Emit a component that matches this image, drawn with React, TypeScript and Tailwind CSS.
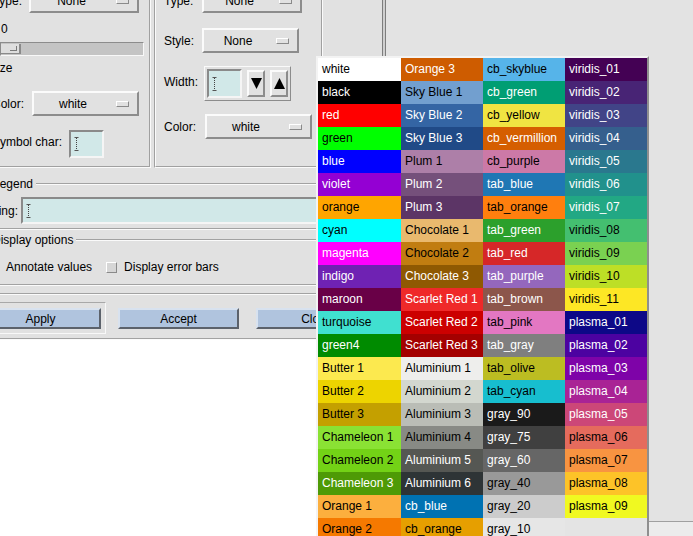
import React from 'react';

type Swatch = [string, string];

const columns: Swatch[][] = [
  [
    ['white', 'bg-[#ffffff] text-black'],
    ['black', 'bg-[#000000] text-white'],
    ['red', 'bg-[#ff0000] text-white'],
    ['green', 'bg-[#00ff00] text-black'],
    ['blue', 'bg-[#0000ff] text-white'],
    ['violet', 'bg-[#9400d3] text-white'],
    ['orange', 'bg-[#ffa500] text-black'],
    ['cyan', 'bg-[#00ffff] text-black'],
    ['magenta', 'bg-[#ff00ff] text-white'],
    ['indigo', 'bg-[#6f22b3] text-white'],
    ['maroon', 'bg-[#690047] text-white'],
    ['turquoise', 'bg-[#40e0d0] text-black'],
    ['green4', 'bg-[#008b00] text-white'],
    ['Butter 1', 'bg-[#fce94f] text-black'],
    ['Butter 2', 'bg-[#edd400] text-black'],
    ['Butter 3', 'bg-[#c4a000] text-black'],
    ['Chameleon 1', 'bg-[#8ae234] text-black'],
    ['Chameleon 2', 'bg-[#73d216] text-black'],
    ['Chameleon 3', 'bg-[#4e9a06] text-white'],
    ['Orange 1', 'bg-[#fcaf3e] text-black'],
    ['Orange 2', 'bg-[#f57900] text-black'],
  ],
  [
    ['Orange 3', 'bg-[#ce5c00] text-white'],
    ['Sky Blue 1', 'bg-[#729fcf] text-black'],
    ['Sky Blue 2', 'bg-[#3465a4] text-white'],
    ['Sky Blue 3', 'bg-[#204a87] text-white'],
    ['Plum 1', 'bg-[#ad7fa8] text-black'],
    ['Plum 2', 'bg-[#75507b] text-white'],
    ['Plum 3', 'bg-[#5c3566] text-white'],
    ['Chocolate 1', 'bg-[#e9b96e] text-black'],
    ['Chocolate 2', 'bg-[#c17d11] text-black'],
    ['Chocolate 3', 'bg-[#8f5902] text-white'],
    ['Scarlet Red 1', 'bg-[#ef2929] text-white'],
    ['Scarlet Red 2', 'bg-[#cc0000] text-white'],
    ['Scarlet Red 3', 'bg-[#a40000] text-white'],
    ['Aluminium 1', 'bg-[#eeeeec] text-black'],
    ['Aluminium 2', 'bg-[#d3d7cf] text-black'],
    ['Aluminium 3', 'bg-[#babdb6] text-black'],
    ['Aluminium 4', 'bg-[#888a85] text-black'],
    ['Aluminium 5', 'bg-[#555753] text-white'],
    ['Aluminium 6', 'bg-[#2e3436] text-white'],
    ['cb_blue', 'bg-[#0072b2] text-white'],
    ['cb_orange', 'bg-[#e69f00] text-black'],
  ],
  [
    ['cb_skyblue', 'bg-[#56b4e9] text-black'],
    ['cb_green', 'bg-[#009e73] text-white'],
    ['cb_yellow', 'bg-[#f0e442] text-black'],
    ['cb_vermillion', 'bg-[#d55e00] text-white'],
    ['cb_purple', 'bg-[#cc79a7] text-black'],
    ['tab_blue', 'bg-[#1f77b4] text-white'],
    ['tab_orange', 'bg-[#ff7f0e] text-black'],
    ['tab_green', 'bg-[#2ca02c] text-white'],
    ['tab_red', 'bg-[#d62728] text-white'],
    ['tab_purple', 'bg-[#9467bd] text-white'],
    ['tab_brown', 'bg-[#8c564b] text-white'],
    ['tab_pink', 'bg-[#e377c2] text-black'],
    ['tab_gray', 'bg-[#7f7f7f] text-white'],
    ['tab_olive', 'bg-[#bcbd22] text-black'],
    ['tab_cyan', 'bg-[#17becf] text-black'],
    ['gray_90', 'bg-[#1a1a1a] text-white'],
    ['gray_75', 'bg-[#404040] text-white'],
    ['gray_60', 'bg-[#666666] text-white'],
    ['gray_40', 'bg-[#999999] text-black'],
    ['gray_20', 'bg-[#cccccc] text-black'],
    ['gray_10', 'bg-[#e6e6e6] text-black'],
  ],
  [
    ['viridis_01', 'bg-[#440154] text-white'],
    ['viridis_02', 'bg-[#482475] text-white'],
    ['viridis_03', 'bg-[#414487] text-white'],
    ['viridis_04', 'bg-[#355f8d] text-white'],
    ['viridis_05', 'bg-[#2a788e] text-white'],
    ['viridis_06', 'bg-[#21918c] text-white'],
    ['viridis_07', 'bg-[#22a884] text-white'],
    ['viridis_08', 'bg-[#44bf70] text-black'],
    ['viridis_09', 'bg-[#7ad151] text-black'],
    ['viridis_10', 'bg-[#bddf26] text-black'],
    ['viridis_11', 'bg-[#fde725] text-black'],
    ['plasma_01', 'bg-[#0d0887] text-white'],
    ['plasma_02', 'bg-[#4c02a1] text-white'],
    ['plasma_03', 'bg-[#7e03a8] text-white'],
    ['plasma_04', 'bg-[#a92395] text-white'],
    ['plasma_05', 'bg-[#cc4778] text-white'],
    ['plasma_06', 'bg-[#e56b5d] text-black'],
    ['plasma_07', 'bg-[#f89441] text-black'],
    ['plasma_08', 'bg-[#fdc328] text-black'],
    ['plasma_09', 'bg-[#f0f921] text-black'],
  ],
];

const colWidths = ['w-[83px]', 'w-[82px]', 'w-[82px]', 'w-[82px]'];

const raised = 'border-2 border-t-[#fbfbfb] border-l-[#fbfbfb] border-r-[#8c8c8c] border-b-[#8c8c8c]';
const sunken = 'border-2 border-t-[#8a8a8a] border-l-[#8a8a8a] border-r-[#f5f5f5] border-b-[#f5f5f5]';
const tkButton = 'border-2 border-t-[#d8e2ef] border-l-[#d8e2ef] border-r-[#5c626b] border-b-[#5c626b] bg-[#b0c4de]';

const Groove = ({ className = '' }: { className?: string }) => (
  <div className={`h-[2px] shrink-0 border-t border-t-[#a2a2a2] border-b border-b-[#fafafa] ${className}`} />
);

const Cursor = () => (
  <svg width="5" height="14" viewBox="0 0 5 14" className="shrink-0">
    <path d="M0.5 0.5h4M0.5 13.5h4" stroke="#555" strokeWidth="1" />
    <path d="M2.5 1v12" stroke="#444" strokeWidth="1" strokeDasharray="1 1" />
  </svg>
);

const Entry = ({ className = '' }: { className?: string }) => (
  <div className={`${sunken} bg-[#d1e8e8] flex items-center pl-[3px] ${className}`}>
    <Cursor />
  </div>
);

const OptionButton = ({ label, className }: { label: string; className: string }) => (
  <div className={`${raised} bg-[#e1e1e1] h-[25px] flex items-center pr-[8px] shrink-0 ${className}`}>
    <span className="flex-1 text-center mr-[4px]">{label}</span>
    <span className="w-[13px] h-[6px] border border-t-white border-l-white border-r-[#8a8a8a] border-b-[#8a8a8a]" />
  </div>
);

const SpinArrow = ({ up }: { up?: boolean }) => (
  <div className={`${raised} bg-[#e1e1e1] ml-[5px] w-[18px] h-[27px] flex items-center justify-center`}>
    <svg width="11" height="11" viewBox="0 0 11 11">
      <polygon points={up ? '5.5,0 11,11 0,11' : '0,0 11,0 5.5,11'} fill="#000" />
    </svg>
  </div>
);

const ColorPopup = () => (
  <div className="absolute left-[316px] top-[56px] flex border-2 border-t-[#f3f3f3] border-l-[#f3f3f3] border-r-[#8f8f8f] border-b-[#8f8f8f] bg-[#e4e4e4]">
    {columns.map((col, i) => (
      <div key={i} className={`flex flex-col ${colWidths[i]}`}>
        {col.map(([name, cls]) => (
          <div key={name} className={`h-[23px] leading-[23px] pl-[4px] whitespace-nowrap overflow-hidden ${cls}`}>
            {name}
          </div>
        ))}
      </div>
    ))}
  </div>
);

export default function App() {
  return (
    <div className="relative flex w-[693px] h-[536px] overflow-hidden whitespace-nowrap bg-[#e3e3e3] text-black text-[12px] leading-[14px] font-['Liberation_Sans',Arial,sans-serif]">
      {/* Dialog + desktop below */}
      <div className="w-[386px] flex flex-col shrink-0">
        <div className="flex h-[340px] bg-[#e1e1e1] overflow-hidden shrink-0">
          <div className="w-[382px] flex flex-col">
            {/* Marker / line frames */}
            <div className="flex h-[168px] shrink-0">
              <div className="w-[151px] h-full border-r border-b border-[#fafafa]">
                <div className="h-full border-r border-b border-[#a0a0a0] flex flex-col">
                  <div className="flex items-center h-[25px] -mt-[12px] shrink-0">
                    <span className="-ml-[8px] w-[30px] text-right shrink-0">Type:</span>
                    <OptionButton label="None" className="ml-[7px] w-[110px]" />
                  </div>
                  <div className="mt-[9px] h-[14px] pl-[1px]">0</div>
                  <div className="mt-[6px] h-[14px] w-[144px] border border-t-[#8c8c8c] border-l-[#8c8c8c] border-b-[#f8f8f8] border-r-[#f8f8f8] bg-[#c4c4c4] flex py-[1px]">
                    <div className="w-[20px] h-full bg-[#dedede] border-r-2 border-b border-r-[#8a8a8a] border-b-[#8a8a8a] flex items-center justify-end pr-[2px]">
                      <div className="w-[7px] h-[5px] border-r border-b border-[#7a7a7a]" />
                    </div>
                  </div>
                  <div className="mt-[5px] h-[14px] -ml-[11px]">Size</div>
                  <div className="mt-[16px] flex items-center h-[25px] shrink-0">
                    <span className="-ml-[9px] w-[33px] text-right shrink-0">Color:</span>
                    <OptionButton label="white" className="ml-[8px] w-[107px]" />
                  </div>
                  <div className="mt-[14px] flex items-center h-[28px] shrink-0">
                    <span className="-ml-[12px] w-[74px] text-right shrink-0 mb-[4px]">Symbol char:</span>
                    <Entry className="ml-[7px] w-[35px] h-[28px]" />
                  </div>
                </div>
              </div>

              <div className="w-[169px] ml-[3px] h-full border-l border-l-[#a0a0a0] border-r border-r-[#fafafa] border-b border-b-[#fafafa]">
                <div className="h-full border-l border-l-[#fafafa] border-r border-r-[#a0a0a0] border-b border-b-[#a0a0a0] flex flex-col">
                  <div className="flex items-center h-[25px] -mt-[12px] shrink-0">
                    <span className="pl-[8px] w-[46px] shrink-0">Type:</span>
                    <OptionButton label="None" className="w-[100px]" />
                  </div>
                  <div className="flex items-center h-[25px] mt-[15px] shrink-0">
                    <span className="pl-[8px] w-[46px] shrink-0">Style:</span>
                    <OptionButton label="None" className="w-[97px]" />
                  </div>
                  <div className="flex items-center h-[35px] mt-[13px] shrink-0">
                    <span className="pl-[8px] w-[46px] shrink-0 mb-[3px]">Width:</span>
                    <div className="ml-[2px] w-[87px] h-[35px] border border-t-[#fafafa] border-l-[#fafafa] border-r-[#8c8c8c] border-b-[#8c8c8c] p-[2px] flex items-center">
                      <Entry className="w-[35px] h-[29px]" />
                      <SpinArrow />
                      <SpinArrow up />
                    </div>
                  </div>
                  <div className="flex items-center h-[25px] mt-[13px] shrink-0">
                    <span className="pl-[8px] w-[46px] shrink-0">Color:</span>
                    <OptionButton label="white" className="ml-[3px] w-[107px]" />
                  </div>
                </div>
              </div>
            </div>

            {/* Legend */}
            <div className="mt-[9px] h-[14px] flex items-center shrink-0">
              <span className="-ml-[7px] shrink-0">Legend</span>
              <Groove className="flex-1 ml-[3px] mr-[4px]" />
            </div>
            <div className="mt-[6px] h-[27px] flex items-center shrink-0">
              <span className="-ml-[17px] w-[35px] text-right shrink-0">String:</span>
              <Entry className="ml-[3px] flex-1 h-[27px] mr-[6px]" />
            </div>
            <Groove className="mt-[4px] mr-[4px]" />

            {/* Display options */}
            <div className="mt-[3px] h-[14px] flex items-center shrink-0">
              <span className="-ml-[8px] shrink-0">Display options</span>
              <Groove className="flex-1 ml-[3px] mr-[4px]" />
            </div>
            <div className="mt-[13px] h-[14px] flex items-center shrink-0">
              <span className="ml-[6px]">Annotate values</span>
              <span className="ml-[14px] w-[11px] h-[11px] bg-[#d6d6d6] border border-t-white border-l-white border-r-[#8a8a8a] border-b-[#8a8a8a]" />
              <span className="ml-[7px]">Display error bars</span>
            </div>
            <Groove className="mt-[10px] mr-[4px]" />
            <Groove className="mt-[7px]" />

            {/* Buttons */}
            <div className="mt-[7px] h-[33px] flex items-start shrink-0 -ml-[25px]">
              <div className="border border-t-[#a8a8a8] border-l-[#a8a8a8] border-r-[#f8f8f8] border-b-[#f8f8f8] px-[4px] pt-[5px] pb-[4px]">
                <div className={`${tkButton} w-[121px] h-[21px] flex items-center justify-center`}>Apply</div>
              </div>
              <div className={`${tkButton} ml-[12px] mt-[6px] w-[121px] h-[21px] flex items-center justify-center shrink-0`}>Accept</div>
              <div className={`${tkButton} ml-[17px] mt-[6px] w-[121px] h-[21px] flex items-center justify-center shrink-0`}>Close</div>
            </div>
            <Groove className="mt-[3px]" />
          </div>
          {/* dialog window edge */}
          <div className="w-[4px] h-full border-x border-[#7d7d7d] bg-[#cfcfcf]" />
        </div>
        <div className="flex-1 bg-white" />
      </div>

      {/* Background window */}
      <div className="flex-1 flex flex-col">
        <div className="flex-1" />
        <div className="h-[15px] border-t border-t-[#a0a0a0] bg-[#ececec]" />
      </div>

      <ColorPopup />
    </div>
  );
}
